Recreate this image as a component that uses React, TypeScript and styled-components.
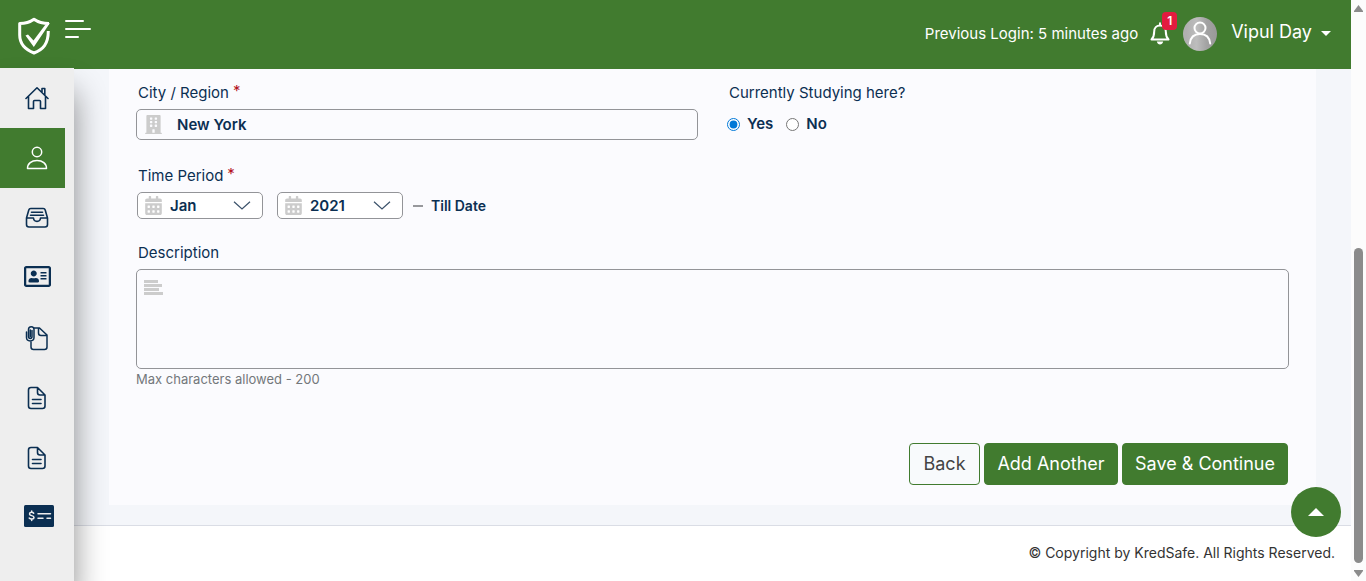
import React from "react";
import styled, { createGlobalStyle } from "styled-components";
import { FaBuilding, FaCalendarAlt, FaRegAddressCard } from "react-icons/fa";

const green = "#417b2f";
const navy = "#0b2f52";

const GlobalStyle = createGlobalStyle`
  *, *::before, *::after { box-sizing: border-box; }
  body {
    margin: 0;
    background: #f4f6fa;
    color: ${navy};
    font-family: Inter, "Liberation Sans", sans-serif;
    font-size: 15px;
    line-height: 20px;
  }
  button, input, select, textarea { font: inherit; color: inherit; }
`;

const Shell = styled.div`
  display: flex;
  height: 100vh;
  overflow: hidden;
`;

const Page = styled.div`
  flex: 1;
  min-width: 0;
  display: flex;
  flex-direction: column;
`;

const Header = styled.header`
  display: flex;
  align-items: flex-start;
  height: 69px;
  padding: 0 20px 0 17px;
  background: ${green};
  color: #fff;
`;

const Logo = styled.a`
  display: block;
  margin-top: 16px;
  line-height: 0;
`;

const MenuButton = styled.button`
  margin: 19px auto 0 14px;
  padding: 0;
  border: 0;
  background: none;
  line-height: 0;
`;

const Account = styled.div`
  display: flex;
  align-items: center;
  height: 67px;
`;

const BellButton = styled.button`
  position: relative;
  margin: 0 13px 0 12px;
  padding: 0;
  border: 0;
  background: none;
  color: #fff;
  line-height: 0;
`;

const Badge = styled.span`
  position: absolute;
  top: -10px;
  right: -7px;
  width: 15px;
  height: 18px;
  border-radius: 4px;
  background: #e31b3f;
  font-size: 12px;
  font-weight: 600;
  line-height: 17px;
  text-align: center;
`;

const UserButton = styled.button`
  display: flex;
  align-items: center;
  gap: 9px;
  padding: 0;
  border: 0;
  background: none;
  color: #fff;
  font-size: 18px;
`;

const UserName = styled.span`
  margin: 0 0 4px 5px;
`;

const Body = styled.div`
  flex: 1;
  display: flex;
  min-height: 0;
`;

const Sidebar = styled.nav`
  position: relative;
  flex: none;
  width: 74px;
  margin-top: -1px;
  background: #eee;
  box-shadow: 0 24px 32px rgba(0, 0, 0, 0.45);
`;

const NavItem = styled.a<{ $active?: boolean }>`
  display: flex;
  align-items: center;
  justify-content: center;
  width: 65px;
  height: 60px;
  padding-left: 9px;
  background: ${(p) => (p.$active ? green : "transparent")};
  color: ${(p) => (p.$active ? "#fff" : navy)};
`;

const Content = styled.div`
  flex: 1;
  min-width: 0;
  display: flex;
  flex-direction: column;
`;

const Panel = styled.form`
  position: relative;
  margin: 0 35px 20px;
  padding: 14px 27px 20px;
  background: #fbfbfe;
`;

const Row = styled.div`
  display: grid;
  grid-template-columns: 1fr 1fr;
  gap: 29px;
  margin-bottom: 26px;
`;

const Group = styled.div`
  margin-bottom: 24px;
`;

const Label = styled.label`
  display: block;
  margin-bottom: 6px;
  padding-left: 2px;
`;

const Caption = styled.div`
  margin-bottom: 6px;
  padding-left: 2px;
`;

const Required = styled.span`
  margin-left: 4px;
  color: #b3121d;
  line-height: 0;
  vertical-align: 2px;
`;

const Box = styled.div<{ $height: number; $gap: number }>`
  display: flex;
  align-items: center;
  gap: ${(p) => p.$gap}px;
  height: ${(p) => p.$height}px;
  padding: 0 7px;
  border: 1px solid #939498;
  border-radius: 5px;
  color: #ccc;
`;

const TextInput = styled.input`
  flex: 1;
  min-width: 0;
  padding: 0;
  border: 0;
  outline: 0;
  background: none;
  color: ${navy};
  font-weight: 600;
`;

const Radios = styled.div`
  display: flex;
  align-items: center;
  gap: 13px;
  height: 30px;
`;

const RadioLabel = styled.label`
  display: flex;
  align-items: center;
  gap: 7px;
  font-weight: 600;
`;

const Radio = styled.input`
  width: 13px;
  height: 13px;
  margin: 0;
  accent-color: #0078d7;
`;

const Period = styled.div`
  display: flex;
  align-items: center;
  padding-left: 1px;
`;

const SelectBox = styled(Box)`
  width: 126px;
  margin-right: 14px;
  padding: 0 11px 0 6px;
  background: #fff;
  & + & { margin-right: 10px; }
`;

const Select = styled.select`
  flex: 1;
  min-width: 0;
  padding: 0;
  border: 0;
  outline: 0;
  appearance: none;
  background: none;
  color: ${navy};
  font-weight: 600;
`;

const Dash = styled.span`
  width: 10px;
  height: 2px;
  margin-right: 8px;
  background: #97989c;
`;

const TillDate = styled.span`
  font-size: 14px;
  font-weight: 600;
`;

const AreaBox = styled(Box)`
  align-items: flex-start;
  padding-top: 10px;
`;

const TextArea = styled.textarea`
  flex: 1;
  height: 80px;
  padding: 0;
  border: 0;
  outline: 0;
  resize: none;
  background: none;
  color: ${navy};
`;

const Hint = styled.div`
  color: #73777b;
  font-size: 13px;
`;

const Actions = styled.div`
  display: flex;
  justify-content: flex-end;
  gap: 4px;
  margin-top: 54px;
  padding-right: 1px;
`;

const Button = styled.button<{ $outline?: boolean; $width: number }>`
  min-width: ${(p) => p.$width}px;
  height: 42px;
  padding: 0 8px;
  border: 1px solid ${green};
  border-radius: 4px;
  background: ${(p) => (p.$outline ? "#f8fafc" : green)};
  color: ${(p) => (p.$outline ? "#444" : "#fff")};
  font-size: 18px;
  white-space: nowrap;
`;

const Footer = styled.footer`
  flex: 1;
  padding: 17px 16px;
  border-top: 1px solid #dadde5;
  background: #fff;
  color: #333;
  font-size: 14px;
  text-align: right;
`;

const ToTop = styled.button`
  position: fixed;
  right: 25px;
  bottom: 44px;
  display: flex;
  align-items: center;
  justify-content: center;
  width: 50px;
  height: 50px;
  padding: 0;
  border: 0;
  border-radius: 50%;
  background: ${green};
`;

const ScrollTrack = styled.div`
  flex: none;
  display: flex;
  flex-direction: column;
  align-items: center;
  width: 15px;
  padding: 5px 0 4px;
  background: #fcfcfc;
`;

const ScrollThumb = styled.div`
  width: 9px;
  height: 315px;
  margin: auto 0 7px;
  border-radius: 5px;
  background: #8b8b8b;
`;

const ShieldLogo = () => (
  <svg width="34" height="39" viewBox="0 0 34 39" fill="none" stroke="#fff" strokeWidth="3">
    <path d="M32 7.500C26 7.500 21 6 17 3.200C13 6 8 7.500 2.700 7.500V19C2.700 28 8 33.500 17 37C26 33.500 31.300 28 31.300 15" strokeLinejoin="round" />
    <path d="M8.500 19.500L11 18.500L16.500 24.500L28.500 8.500L33 7L16.800 31Z" fill="#fff" stroke="none" />
  </svg>
);

const MenuIcon = () => (
  <svg width="26" height="20" viewBox="0 0 26 20" fill="#fff">
    <rect y="1" width="19" height="2" rx="1" />
    <rect y="9" width="26" height="2" rx="1" />
    <rect y="17" width="14" height="2" rx="1" />
  </svg>
);

const BellIcon = () => (
  <svg width="20" height="23" viewBox="0 0 20 23" fill="none" stroke="#fff" strokeWidth="2" strokeLinejoin="round">
    <path d="M1.500 17.500C4 15 4.200 13 4.200 9.500C4.200 6 6.500 3.500 10 3.500S15.800 6 15.800 9.500C15.800 13 16 15 18.500 17.500Z" />
    <path d="M10 1.200V3.200" strokeLinecap="round" />
    <path d="M6.800 19.500H13.200C12.800 21.500 11.500 22.500 10 22.500S7.200 21.500 6.800 19.500Z" fill="#fff" stroke="none" />
  </svg>
);

const Avatar = () => (
  <svg width="34" height="34" viewBox="0 0 34 34" fill="none" stroke="#fff" strokeWidth="2">
    <defs>
      <linearGradient id="avatar" x1="0" x2="1">
        <stop offset="0.1" stopColor="#b0b0b0" />
        <stop offset="0.4" stopColor="#bdbdbd" />
        <stop offset="0.7" stopColor="#a2a2a2" />
        <stop offset="1" stopColor="#999" />
      </linearGradient>
    </defs>
    <circle cx="17" cy="17" r="17" fill="url(#avatar)" stroke="none" />
    <circle cx="17" cy="11" r="5.500" />
    <path d="M6.800 26.500C7.500 20 11.500 17 17 17S26.500 20 27.200 26.500" strokeLinecap="round" />
  </svg>
);

const Caret = () => (
  <svg width="10" height="5" viewBox="0 0 10 5" fill="#fff"><path d="M0 0H10L5 5Z" /></svg>
);

const HomeIcon = () => (
  <svg width="24" height="24" viewBox="0 0 24 24" fill="none" stroke="currentColor" strokeWidth="1.600" strokeLinejoin="round" strokeLinecap="round">
    <path d="M1 12.500L12 1.800L23 12.500M3.500 10.500V22.500H8.500V15.500Q8.500 14.500 9.500 14.500H14.500Q15.500 14.500 15.500 15.500V22.500H20.500V10.500M17 6V2.500H19.800V9" />
  </svg>
);

const PersonIcon = () => (
  <svg width="22" height="24" viewBox="0 0 22 24" fill="none" stroke="currentColor" strokeWidth="1.500" strokeLinejoin="round">
    <circle cx="11" cy="6" r="4.700" />
    <path d="M1.500 22.500C1.500 17.500 5.500 14.500 11 14.500S20.500 17.500 20.500 22.500Z" />
  </svg>
);

const InboxIcon = () => (
  <svg width="24" height="22" viewBox="0 0 24 22" fill="none" stroke="currentColor" strokeWidth="1.600" strokeLinejoin="round" strokeLinecap="round">
    <path d="M1.500 11L3.800 3Q4.200 1.500 5.800 1.500H18.200Q19.800 1.500 20.200 3L22.500 11V17.500Q22.500 20 20 20H4Q1.500 20 1.500 17.500ZM1.500 11H8.500C8.800 15.500 15.200 15.500 15.500 11H22.500" />
    <path d="M6.500 5.200H17.500M5.500 8.200H18.500" />
  </svg>
);

const CardIcon = styled(FaRegAddressCard)`
  margin-bottom: 4px;
`;

const ClipIcon = () => (
  <svg width="24" height="26" viewBox="0 0 24 26" fill="none" stroke="currentColor" strokeWidth="1.500" strokeLinejoin="round" strokeLinecap="round">
    <path d="M9 3H14.500L22 10V22Q22 24.500 19.500 24.500H8.500Q6 24.500 6 22V17M13.500 3V8Q13.500 10.500 16 10.500H22" />
    <path d="M1.500 7V12.500C1.500 17 9 17 9 12.500V4.500C9 .7 3.500 .7 3.500 4.500V11.500C3.500 14 7 14 7 11.500V5.500M5.300 5V11.500" />
  </svg>
);

const FileIcon = () => (
  <svg width="20" height="24" viewBox="0 0 20 24" fill="none" stroke="currentColor" strokeWidth="1.600" strokeLinejoin="round" strokeLinecap="round">
    <path d="M4 1.500H10.500L18 9V20Q18 22.500 15.500 22.500H4Q1.500 22.500 1.500 20V4Q1.500 1.500 4 1.500ZM10.500 1.500V6.500Q10.500 9 13 9H18M5.500 13.500H14M5.500 17.500H14" />
  </svg>
);

const ChequeSvg = styled.svg`
  margin: 0 0 4px 4px;
`;

const ChequeIcon = () => (
  <ChequeSvg width="30" height="22" viewBox="0 0 30 22" fill="none" stroke="#eee" strokeWidth="1.500" strokeLinecap="round">
    <rect width="30" height="22" rx="1.500" fill="currentColor" stroke="none" />
    <path d="M9.700 8.200C8.700 6.900 5.500 6.900 5.500 8.900C5.500 11 10 10.200 10 12.500C10 14.500 6.500 14.500 5.200 13M7.700 6V7M7.700 14.300V15.500M14 8.800H26.500M14 13.200H19M23 13.200H26.500" />
  </ChequeSvg>
);

const Chevron = () => (
  <svg width="18" height="9" viewBox="0 0 18 9" fill="none" stroke="#3b526b" strokeWidth="1.200">
    <path d="M1 .7L9 8L17 .7" />
  </svg>
);

const LinesIcon = () => (
  <svg width="19" height="15" viewBox="0 0 19 15" fill="#ccc">
    <path d="M0 0H14V3H0ZM0 4H18V7H0ZM0 8H15V11H0ZM0 12H19V15H0Z" />
  </svg>
);

const navItems = [
  { name: "Home", icon: <HomeIcon /> },
  { name: "Profile", icon: <PersonIcon />, active: true },
  { name: "Inbox", icon: <InboxIcon /> },
  { name: "Identity", icon: <CardIcon size={27} /> },
  { name: "Attachments", icon: <ClipIcon /> },
  { name: "Documents", icon: <FileIcon /> },
  { name: "Reports", icon: <FileIcon /> },
  { name: "Payments", icon: <ChequeIcon /> },
];

export default function App() {
  return (
    <>
      <GlobalStyle />
      <Shell>
        <Page>
          <Header>
            <Logo href="#" aria-label="KredSafe"><ShieldLogo /></Logo>
            <MenuButton aria-label="Toggle menu"><MenuIcon /></MenuButton>
            <Account>
              <span>Previous Login: 5 minutes ago</span>
              <BellButton aria-label="Notifications">
                <BellIcon />
                <Badge>1</Badge>
              </BellButton>
              <UserButton>
                <Avatar />
                <UserName>Vipul Day</UserName>
                <Caret />
              </UserButton>
            </Account>
          </Header>
          <Body>
            <Sidebar>
              {navItems.map((item) => (
                <NavItem key={item.name} href="#" aria-label={item.name} $active={item.active}>
                  {item.icon}
                </NavItem>
              ))}
            </Sidebar>
            <Content>
              <Panel onSubmit={(e) => e.preventDefault()}>
                <Row>
                  <div>
                    <Label htmlFor="city">City / Region<Required>*</Required></Label>
                    <Box $height={31} $gap={14}>
                      <FaBuilding size={19} />
                      <TextInput id="city" defaultValue="New York" />
                    </Box>
                  </div>
                  <div role="radiogroup" aria-labelledby="studying">
                    <Caption id="studying">Currently Studying here?</Caption>
                    <Radios>
                      <RadioLabel><Radio type="radio" name="studying" defaultChecked />Yes</RadioLabel>
                      <RadioLabel><Radio type="radio" name="studying" />No</RadioLabel>
                    </Radios>
                  </div>
                </Row>
                <Group>
                  <Label htmlFor="month">Time Period<Required>*</Required></Label>
                  <Period>
                    <SelectBox $height={27} $gap={7}>
                      <FaCalendarAlt size={19} />
                      <Select id="month" defaultValue="Jan"><option>Jan</option><option>Feb</option></Select>
                      <Chevron />
                    </SelectBox>
                    <SelectBox $height={27} $gap={7}>
                      <FaCalendarAlt size={19} />
                      <Select aria-label="Year" defaultValue="2021"><option>2021</option><option>2020</option></Select>
                      <Chevron />
                    </SelectBox>
                    <Dash />
                    <TillDate>Till Date</TillDate>
                  </Period>
                </Group>
                <Label htmlFor="description">Description</Label>
                <AreaBox $height={100} $gap={14}>
                  <LinesIcon />
                  <TextArea id="description" />
                </AreaBox>
                <Hint>Max characters allowed - 200</Hint>
                <Actions>
                  <Button type="button" $outline $width={71}>Back</Button>
                  <Button type="button" $width={134}>Add Another</Button>
                  <Button type="submit" $width={166}>Save &amp; Continue</Button>
                </Actions>
              </Panel>
              <Footer>© Copyright by KredSafe. All Rights Reserved.</Footer>
            </Content>
          </Body>
        </Page>
        <ScrollTrack>
          <svg width="9" height="7" viewBox="0 0 9 7" fill="#8b8b8b"><path d="M4.500 0L9 6V7H0V6Z" /></svg>
          <ScrollThumb />
          <svg width="9" height="7" viewBox="0 0 9 7" fill="#8b8b8b"><path d="M4.500 7L9 1V0H0V1Z" /></svg>
        </ScrollTrack>
      </Shell>
      <ToTop aria-label="Back to top">
        <svg width="16" height="8" viewBox="0 0 16 8" fill="#fff"><path d="M8 0L16 8H0Z" /></svg>
      </ToTop>
    </>
  );
}
